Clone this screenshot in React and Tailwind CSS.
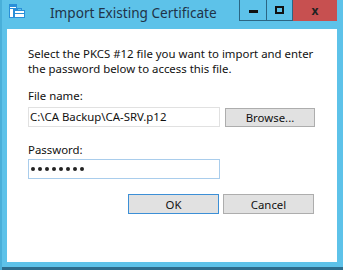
import React from 'react'

function CertIcon() {
  return (
    <svg width="16" height="14" viewBox="0 0 16 14">
      <rect x="0" y="0" width="8" height="14" fill="#2a8fd8" />
      <rect x="1" y="3" width="6" height="1" fill="#ffffff" />
      <rect x="1" y="5" width="3" height="8" fill="#ffffff" />
      <rect x="5.5" y="6.5" width="10" height="7" fill="#ffffff" stroke="#2a8fd8" />
      <rect x="8.5" y="4.5" width="4" height="2" fill="none" stroke="#2a8fd8" />
      <line x1="5.5" y1="9.5" x2="15.5" y2="9.5" stroke="#2a8fd8" />
    </svg>
  )
}

export default function App() {
  const font = { fontFamily: '"Noto Sans", "Open Sans", sans-serif' }
  return (
    <div className="w-[343px] h-[270px] bg-[#5dc2e9] flex flex-col overflow-hidden border-l-2 border-[#49afd9]" style={font}>
      {/* title bar */}
      <div className="h-[29px] flex items-start shrink-0">
        <div className="mt-[4px] ml-[7px]">
          <CertIcon />
        </div>
        <div className="ml-[25px] mt-[4px] text-[13.6px] leading-[18px] text-[#1f3348]">
          Import Existing Certificate
        </div>
        <div className="ml-auto mr-[6px] flex h-[21px]">
          <div className="w-[28px] border border-t-0 border-[#2b6684] flex items-center justify-center">
            <div className="w-[9px] h-[3px] bg-[#111] mt-[2px]" />
          </div>
          <div className="w-[26px] border border-t-0 border-l-0 border-[#2b6684] flex items-center justify-center">
            <div className="w-[9px] h-[8px] border-2 border-[#111]" />
          </div>
          <div className="w-[44px] bg-[#c75050] flex items-center justify-center text-[12px] font-bold text-[#222]">
            x
          </div>
        </div>
      </div>

      {/* client area */}
      <div className="flex-1 mx-[5px] mr-[6px] bg-white text-[11.4px] leading-[15px] text-[#111] pl-[21px] pt-[17px]">
        <p>
          Select the PKCS #12 file you want to import and enter
          <br />
          the password below to access this file.
        </p>

        <div className="mt-[12px]">File name:</div>
        <div className="mt-[4px] flex gap-[5px]">
          <div className="w-[192px] h-[20px] border border-[#e1e1e1] pl-[1px] leading-[18px]">
            C:\CA Backup\CA-SRV.p12
          </div>
          <div className="w-[90px] h-[19px] mt-[1px] border border-[#adadad] bg-[#e1e1e1] flex items-center justify-center">
            Browse...
          </div>
        </div>

        <div className="mt-[15px]">Password:</div>
        <div className="mt-[2px] w-[192px] h-[20px] border border-[#a9cdec] pl-[2px] flex items-center gap-[3px]">
          {[0, 1, 2, 3, 4, 5, 6, 7].map((i) => (
            <span key={i} className="w-[4px] h-[4px] rounded-full bg-[#222]" />
          ))}
        </div>

        <div className="mt-[15px] flex justify-end gap-[4px] pr-[23px]">
          <div className="w-[91px] h-[20px] border border-[#3c8fd6] bg-[#e1e1e1] flex items-center justify-center">OK</div>
          <div className="w-[91px] h-[20px] border border-[#adadad] bg-[#e1e1e1] flex items-center justify-center">Cancel</div>
        </div>
      </div>

      <div className="h-[5px] shrink-0" />
      <div className="h-[3px] bg-[#2d6c8c] shrink-0 -ml-[2px]" />
    </div>
  )
}
